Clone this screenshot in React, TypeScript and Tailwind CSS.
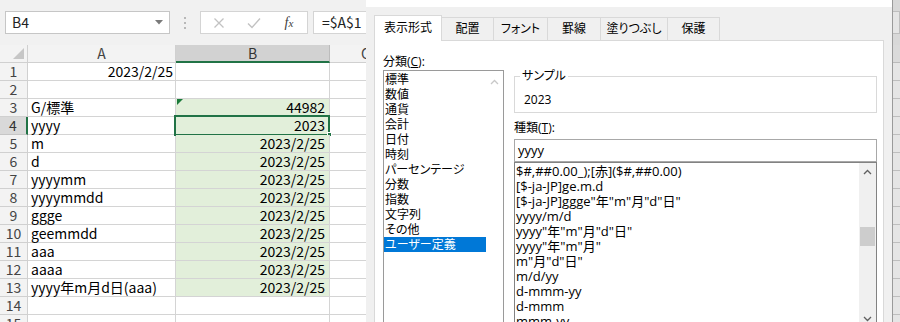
import React from "react";

type Row = {
  n: number;
  a?: string;
  aRight?: boolean;
  b?: string;
  fill?: boolean;
  tri?: boolean;
  active?: boolean;
};

const rows: Row[] = [
  { n: 1, a: "2023/2/25", aRight: true },
  { n: 2 },
  { n: 3, a: "G/標準", b: "44982", fill: true, tri: true },
  { n: 4, a: "yyyy", b: "2023", fill: true, active: true },
  { n: 5, a: "m", b: "2023/2/25", fill: true },
  { n: 6, a: "d", b: "2023/2/25", fill: true },
  { n: 7, a: "yyyymm", b: "2023/2/25", fill: true },
  { n: 8, a: "yyyymmdd", b: "2023/2/25", fill: true },
  { n: 9, a: "ggge", b: "2023/2/25", fill: true },
  { n: 10, a: "geemmdd", b: "2023/2/25", fill: true },
  { n: 11, a: "aaa", b: "2023/2/25", fill: true },
  { n: 12, a: "aaaa", b: "2023/2/25", fill: true },
  { n: 13, a: "yyyy年m月d日(aaa)", b: "2023/2/25", fill: true },
  { n: 14 },
  { n: 15 },
];

const extraCols = ["C", "D", "E", "F", "G", "H", "I", "J"];

const categories = [
  "標準",
  "数値",
  "通貨",
  "会計",
  "日付",
  "時刻",
  "パーセンテージ",
  "分数",
  "指数",
  "文字列",
  "その他",
  "ユーザー定義",
];

const formats = [
  '$#,##0.00_);[赤]($#,##0.00)',
  "[$-ja-JP]ge.m.d",
  '[$-ja-JP]ggge"年"m"月"d"日"',
  "yyyy/m/d",
  'yyyy"年"m"月"d"日"',
  'yyyy"年"m"月"',
  'm"月"d"日"',
  "m/d/yy",
  "d-mmm-yy",
  "d-mmm",
  "mmm-yy",
];

const tabs = [
  { label: "表示形式", w: "w-[68px]" },
  { label: "配置", w: "w-[53px]" },
  { label: "フォント", w: "w-[55px]" },
  { label: "罫線", w: "w-[54px]" },
  { label: "塗りつぶし", w: "w-[68px]" },
  { label: "保護", w: "w-[53px]" },
];

function FormulaBar() {
  return (
    <div className="h-[45px] bg-[#f1f1f1] flex items-start pt-[11px] pl-[5px]">
      <div className="w-[165px] h-[23px] bg-white border border-[#c6c6c6] flex items-center pl-[6px] pr-[6px]">
        <span className="text-[14px] leading-[21px] text-[#222] flex-1">B4</span>
        <svg width="8" height="5" viewBox="0 0 8 5">
          <path d="M0 0 L8 0 L4 4.5 Z" fill="#7a7a7a" />
        </svg>
      </div>
      <div className="w-[30px] h-[23px] flex flex-col items-center justify-center gap-[3px]">
        <div className="w-[2px] h-[2px] bg-[#b8b8b8]" />
        <div className="w-[2px] h-[2px] bg-[#b8b8b8]" />
        <div className="w-[2px] h-[2px] bg-[#b8b8b8]" />
      </div>
      <div className="w-[108px] h-[23px] bg-white border border-[#d4d4d4] flex items-center">
        <div className="w-[36px] flex justify-center">
          <svg width="12" height="12" viewBox="0 0 12 12">
            <path d="M1.5 1.5 L10.5 10.5 M10.5 1.5 L1.5 10.5" stroke="#c2c2c2" strokeWidth="1.3" />
          </svg>
        </div>
        <div className="w-[34px] flex justify-center">
          <svg width="14" height="12" viewBox="0 0 14 12">
            <path d="M1 6.5 L5 10.5 L13 1.5" stroke="#c2c2c2" strokeWidth="1.4" fill="none" />
          </svg>
        </div>
        <div className="w-[36px] flex justify-center">
          <span className="[font-family:Liberation_Serif,serif] italic text-[14px] leading-[16px] text-[#404040]">
            f<span className="text-[11px]">x</span>
          </span>
        </div>
      </div>
      <div className="ml-[5px] flex-1 h-[23px] bg-white border border-[#d4d4d4] flex items-center pl-[8px]">
        <span className="text-[14px] leading-[21px] text-[#222]">=$A$1</span>
      </div>
    </div>
  );
}

function Sheet() {
  return (
    <div className="flex flex-col">
      <div className="flex h-[18px] bg-[#f3f3f3] text-[14px] leading-[17px] text-[#444]">
        <div className="relative w-[28px] shrink-0 border-r border-b border-[#d0d0d0]">
          <svg className="absolute right-[3px] bottom-[3px]" width="11" height="11" viewBox="0 0 11 11">
            <path d="M11 0 L11 11 L0 11 Z" fill="#c6c6c6" />
          </svg>
        </div>
        <div className="w-[148px] shrink-0 border-r border-b border-[#d0d0d0] text-center">A</div>
        <div className="w-[154px] shrink-0 bg-[#d2d2d2] border-r border-[#bcbcbc] border-b-2 border-b-[#217346] text-center leading-[16px] text-[#333]">
          B
        </div>
        {extraCols.map((c) => (
          <div key={c} className="w-[72px] shrink-0 border-r border-b border-[#d0d0d0] text-center">
            {c}
          </div>
        ))}
      </div>
      {rows.map((r) => (
        <div key={r.n} className="flex h-[18px] text-[14px] leading-[17px] text-black">
          <div
            className={
              r.active
                ? "w-[28px] shrink-0 bg-[#d9d9d9] border-b border-[#c6c6c6] border-r-2 border-r-[#217346] text-center text-[#333]"
                : "w-[28px] shrink-0 bg-[#f3f3f3] border-r border-b border-[#d0d0d0] text-center text-[#444]"
            }
          >
            {r.n}
          </div>
          <div
            className={
              r.aRight
                ? "w-[148px] shrink-0 border-r border-b border-[#d4d4d4] text-right pr-[2px] whitespace-nowrap"
                : "w-[148px] shrink-0 border-r border-b border-[#d4d4d4] pl-[3px] whitespace-nowrap"
            }
          >
            {r.a}
          </div>
          <div
            className={
              r.fill
                ? "relative w-[154px] shrink-0 bg-[#e2efda] border-r border-b border-[#d4d4d4] text-right pr-[4px]"
                : "relative w-[154px] shrink-0 border-r border-b border-[#d4d4d4] text-right pr-[4px]"
            }
          >
            {r.b}
            {r.tri && (
              <svg className="absolute left-[1px] top-0" width="6" height="6" viewBox="0 0 6 6">
                <path d="M0 0 L6 0 L0 6 Z" fill="#1a7a3a" />
              </svg>
            )}
            {r.active && (
              <>
                <div className="absolute -left-[2px] -top-[2px] w-[156px] h-[21px] border-2 border-[#217346]" />
                <div className="absolute -right-[3px] -bottom-[3px] w-[5px] h-[5px] bg-[#217346] border border-white" />
              </>
            )}
          </div>
          {extraCols.map((c) => (
            <div key={c} className="w-[72px] shrink-0 border-r border-b border-[#d4d4d4]" />
          ))}
        </div>
      ))}
    </div>
  );
}

function Chevron({ up, color }: { up: boolean; color: string }) {
  return (
    <svg width="9" height="6" viewBox="0 0 9 6">
      <path
        d={up ? "M1 5 L4.5 1.5 L8 5" : "M1 1 L4.5 4.5 L8 1"}
        stroke={color}
        strokeWidth="1.3"
        fill="none"
      />
    </svg>
  );
}

function Dialog() {
  return (
    <div className="absolute left-[366px] top-0 w-[527px] h-[322px] bg-[#f0f0f0] border-r border-[#9a9a9a] text-[12px] text-black [font-family:Open_Sans,Noto_Sans_CJK_JP,sans-serif] [font-feature-settings:'palt']">
      <div className="h-[7px] bg-white" />
      <div className="flex items-end h-[33px] pl-[8px]">
        {tabs.map((t, i) =>
          i === 0 ? (
            <div
              key={t.label}
              className={`${t.w} h-[26px] bg-white border border-b-0 border-[#d9d9d9] relative z-10 -mb-px flex items-center justify-center pb-[2px]`}
            >
              {t.label}
            </div>
          ) : (
            <div
              key={t.label}
              className={`${t.w} h-[23px] bg-[#f0f0f0] border border-b-0 border-[#d9d9d9] -ml-px flex items-center justify-center`}
            >
              {t.label}
            </div>
          )
        )}
      </div>
      <div className="ml-[8px] w-[510px] h-[300px] bg-white border border-[#d9d9d9] flex">
        <div className="w-[130px] shrink-0 pl-[8px]">
          <div className="pt-[13px] h-[29px] leading-[16px]">
            分類(<span className="underline">C</span>):
          </div>
          <div className="w-[121px] h-[260px] border border-[#9a9a9a] flex">
            <div className="w-[102px] pt-[1px]">
              {categories.map((c, i) => (
                <div
                  key={c}
                  className={
                    i === categories.length - 1
                      ? "h-[15px] leading-[15px] pl-[1px] bg-[#0078d7] text-white whitespace-nowrap"
                      : "h-[15px] leading-[15px] pl-[1px] whitespace-nowrap"
                  }
                >
                  {c}
                </div>
              ))}
            </div>
            <div className="flex-1 flex justify-center pt-[8px]">
              <div className="h-[6px] flex">
                <Chevron up color="#c8c8c8" />
              </div>
            </div>
          </div>
        </div>
        <div className="ml-[9px] w-[363px] shrink-0">
          <div className="mt-[35px] relative h-[37px] border border-[#d9d9d9] pl-[9px] pt-[15px] leading-[16px]">
            <span className="absolute left-[5px] -top-[9px] bg-white px-[2px] leading-[16px]">サンプル</span>
            2023
          </div>
          <div className="h-[26px] pt-[7px] leading-[16px]">
            種類(<span className="underline">T</span>):
          </div>
          <div className="h-[23px] border border-[#a8a8a8] pl-[3px] leading-[20px] text-[13px]">yyyy</div>
          <div className="h-[200px] border border-[#828282] flex">
            <div className="flex-1 pt-[1px] pl-[1px] text-[13px]">
              {formats.map((f) => (
                <div key={f} className="h-[15px] leading-[15px] whitespace-nowrap">
                  {f}
                </div>
              ))}
            </div>
            <div className="w-[17px] bg-[#f0f0f0] flex flex-col items-center">
              <div className="h-[18px] flex items-center">
                <Chevron up color="#606060" />
              </div>
              <div className="mt-[46px] w-[15px] h-[19px] bg-[#cdcdcd]" />
              <div className="mt-[66px] h-[14px] flex items-center">
                <Chevron up={false} color="#606060" />
              </div>
            </div>
          </div>
        </div>
      </div>
    </div>
  );
}

export default function App() {
  return (
    <div className="relative w-[900px] h-[322px] overflow-hidden bg-white [font-family:Noto_Sans_CJK_JP,Noto_Sans,sans-serif]">
      <FormulaBar />
      <Sheet />
      <Dialog />
      <div className="absolute left-[893px] top-0 w-[7px] h-[322px] bg-black/10" />
    </div>
  );
}
